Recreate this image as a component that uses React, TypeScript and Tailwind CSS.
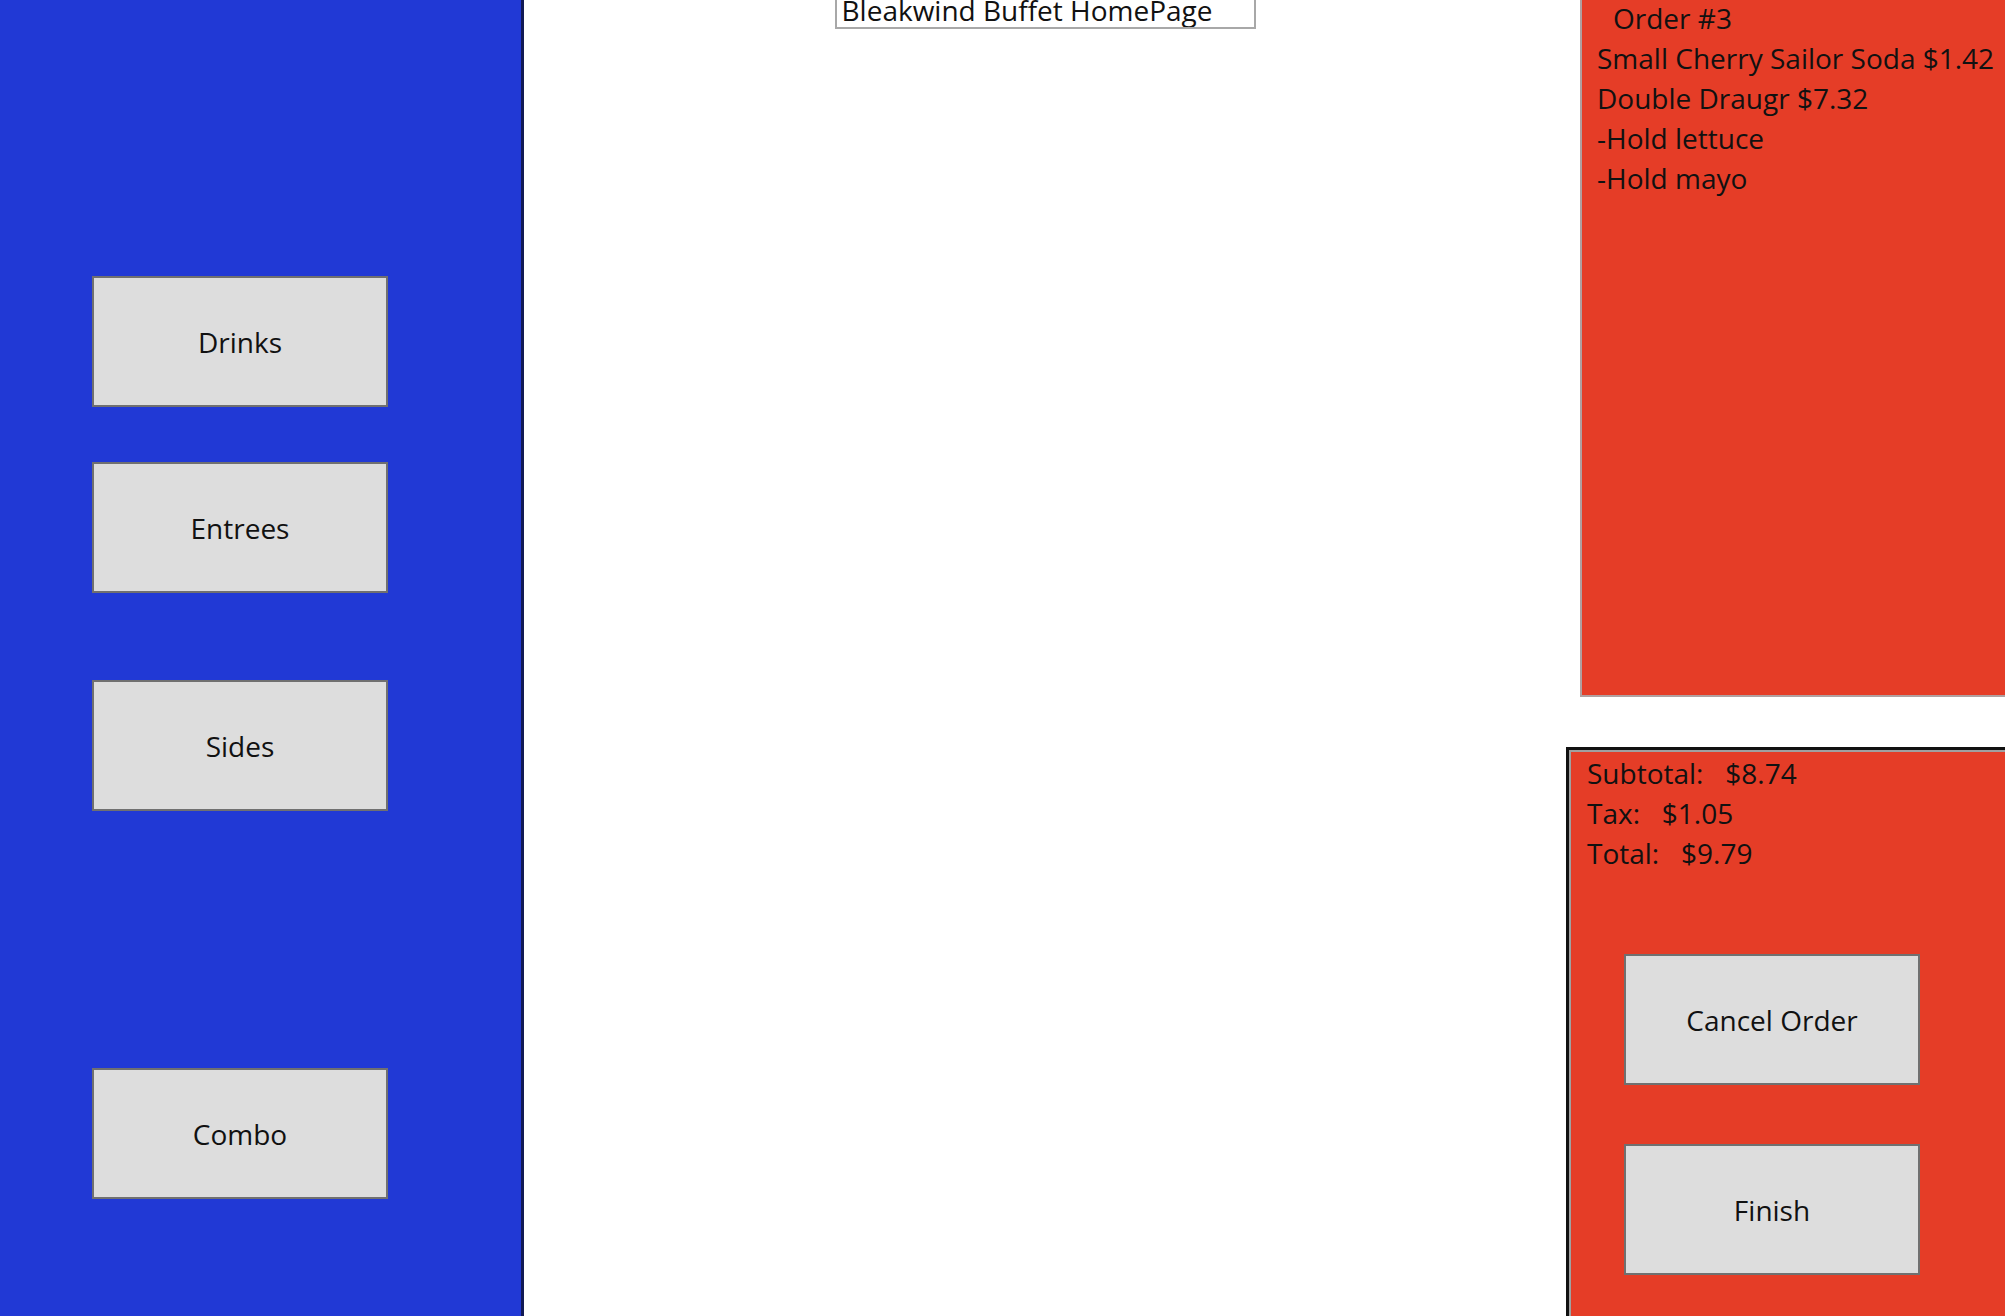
import React from 'react';

const font = { fontFamily: '"Open Sans", "Noto Sans", sans-serif' };

function MenuButton({ label, className }: { label: string; className?: string }) {
  return (
    <button
      className={`w-[296px] h-[131px] bg-[#dddddd] border-2 border-[#707070] text-[28px] text-[#111] flex items-center justify-center ${className ?? ''}`}
    >
      {label}
    </button>
  );
}

export default function App() {
  const orderLines = ['Small Cherry Sailor Soda $1.42', 'Double Draugr $7.32', '-Hold lettuce', '-Hold mayo'];

  return (
    <div className="h-screen w-full flex overflow-hidden bg-white" style={font}>
      {/* category buttons */}
      <div className="w-[524px] shrink-0 bg-[#2139d5] border-r-[3px] border-[#121a55] pl-[92px] pt-[276px] flex flex-col">
        <MenuButton label="Drinks" />
        <MenuButton label="Entrees" className="mt-[55px]" />
        <MenuButton label="Sides" className="mt-[87px]" />
        <MenuButton label="Combo" className="mt-[257px]" />
      </div>

      {/* main area */}
      <div className="flex-1 flex justify-center">
        <div className="w-[421px] h-[36px] -mt-[7px] border-2 border-[#a8a8a8] bg-white px-[5px] text-[28px] leading-[30px] text-[#111] whitespace-nowrap overflow-hidden">
          Bleakwind Buffet HomePage
        </div>
      </div>

      {/* order column */}
      <div className="w-[439px] shrink-0 flex flex-col">
        <div className="ml-[14px] h-[697px] bg-[#e53d27] border-l-2 border-b-2 border-[#b0a0a0] pl-[15px] text-[28px] text-[#111] leading-[40px] overflow-hidden">
          <div className="-mt-[2px]">
            <div className="pl-[16px]">Order #3</div>
            {orderLines.map((line, i) => (
              <div key={i}>{line}</div>
            ))}
          </div>
        </div>
        <div className="mt-[50px] flex-1 bg-[#e53d27] border-l-[3px] border-t-[3px] border-[#111] text-[28px] text-[#111] leading-[40px] flex flex-col">
          <div className="flex-1 border-l-2 border-t-2 border-[#a0a0a0] pl-[16px] pt-[1px]">
            <div>Subtotal:&nbsp;&nbsp;&nbsp;$8.74</div>
            <div>Tax:&nbsp;&nbsp;&nbsp;$1.05</div>
            <div>Total:&nbsp;&nbsp;&nbsp;$9.79</div>
            <div className="mt-[81px] ml-[37px] flex flex-col gap-[59px]">
              <MenuButton label="Cancel Order" className="w-[294px] h-[130px]" />
              <MenuButton label="Finish" className="w-[294px] h-[130px]" />
            </div>
          </div>
        </div>
      </div>
    </div>
  );
}
